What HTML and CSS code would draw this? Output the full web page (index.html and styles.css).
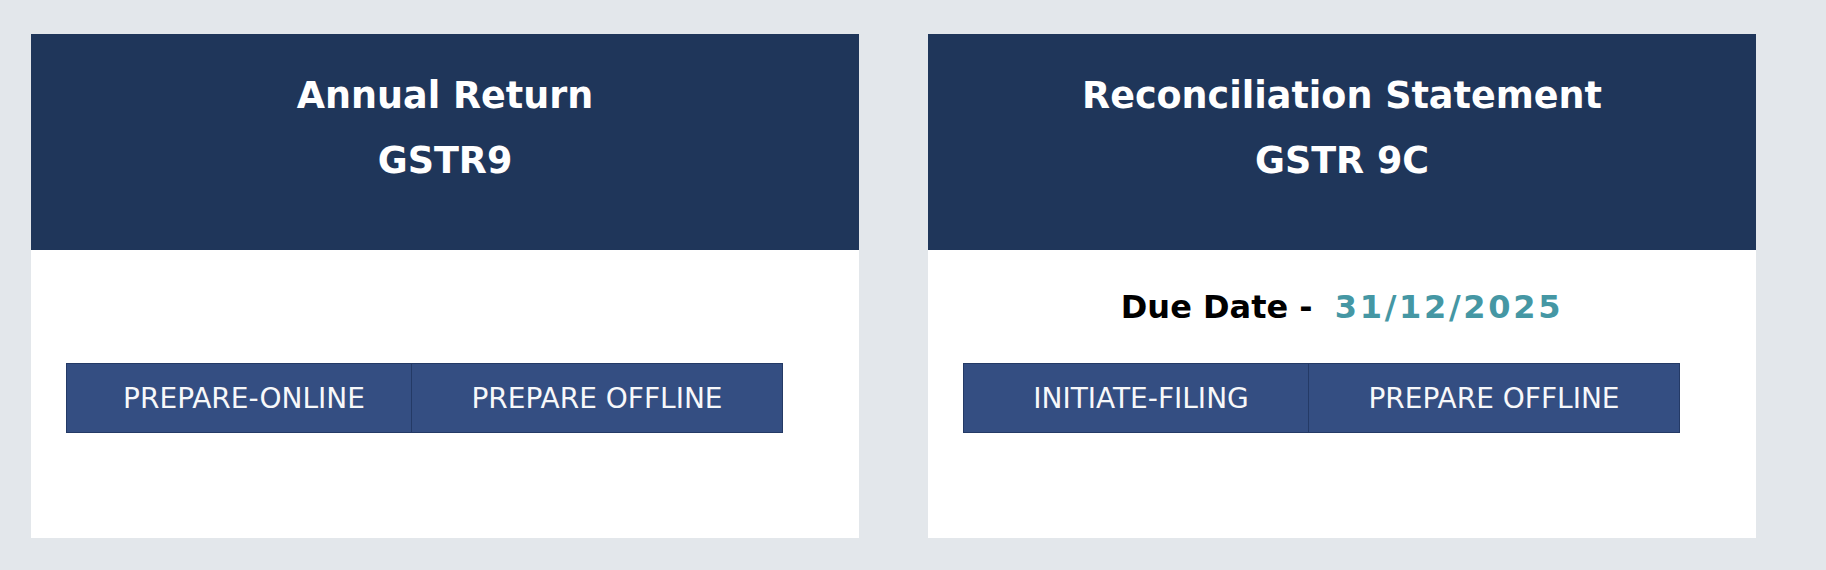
FILE: index.html
```html
<!DOCTYPE html>
<html lang="en">
  <head>
    <meta charset="UTF-8" />
    <meta name="viewport" content="width=device-width, initial-scale=1.0" />
    <title>GST Annual Return</title>
    <link rel="stylesheet" href="styles.css">
  </head>
  <body>
    <section class="cards">
      <div class="card">
        <div class="cardHead">
          <h2>Annual Return</h2>
          <h2>GSTR9</h2>
        </div>
        <div class="cardBody">
          <p class="due"></p>
          <div class="btnGroup">
            <button class="first">PREPARE-ONLINE</button>
            <button class="second">PREPARE OFFLINE</button>
          </div>
        </div>
      </div>
      <div class="card">
        <div class="cardHead">
          <h2>Reconciliation Statement</h2>
          <h2>GSTR 9C</h2>
        </div>
        <div class="cardBody">
          <p class="due">Due Date - <span class="date">31/12/2025</span></p>
          <div class="btnGroup">
            <button class="first">INITIATE-FILING</button>
            <button class="second">PREPARE OFFLINE</button>
          </div>
        </div>
      </div>
    </section>
  </body>
</html>
```

FILE: styles.css
```css
* {
  margin: 0px;
  padding: 0px;
  box-sizing: border-box;
}
body {
  background-color: #e3e7eb;
  font-family: "DejaVu Sans", Verdana, sans-serif;
}
.cards {
  display: flex;
  gap: 69px;
  padding: 34px 70px 32px 31px;
}
.card {
  width: 828px;
  height: 504px;
  background-color: #fff;
  display: flex;
  flex-direction: column;
}
.cardHead {
  height: 216px;
  background-color: #1f365a;
  color: #fff;
  padding-top: 42px;
  display: flex;
  flex-direction: column;
  align-items: center;
  gap: 25px;
}
.cardHead h2 {
  font-size: 36.5px;
  line-height: 40px;
  font-weight: bold;
}
.cardBody {
  padding: 37px 35px 0px 35px;
}
.due {
  height: 40px;
  line-height: 40px;
  font-size: 32px;
  font-weight: bold;
  color: #000;
  text-align: center;
  margin-bottom: 36px;
  white-space: pre;
}
.date {
  color: #4597a4;
  letter-spacing: 2.7px;
  margin-left: 11px;
}
.btnGroup {
  display: flex;
}
.btnGroup button {
  height: 70px;
  background-color: #344e82;
  color: #f7f8fa;
  border: 1px solid #243a66;
  font-family: "DejaVu Sans", Tahoma, sans-serif;
  font-size: 28px;
  outline: none;
}
.btnGroup .first {
  width: 346px;
  padding-left: 10px;
}
.btnGroup .second {
  width: 371px;
  border-left: none;
}
```
